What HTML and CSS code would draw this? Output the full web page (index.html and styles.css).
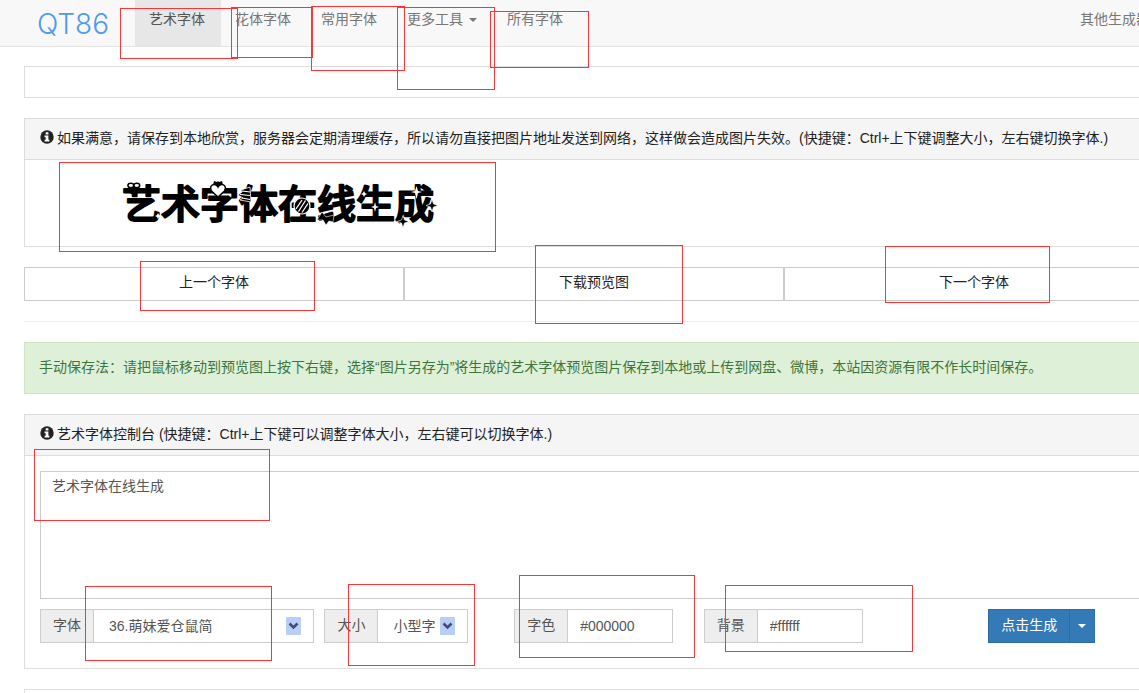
FILE: index.html
```html
<!DOCTYPE html>
<html lang="zh-CN">
<head>
<meta charset="utf-8">
<title>QT86 艺术字体</title>
<link rel="stylesheet" href="styles.css">
</head>
<body>
<div class="page">
  <header class="navbar">
    <a class="brand" href="#">QT86</a>
    <nav class="nav">
      <a class="nav-link active" href="#">艺术字体</a>
      <a class="nav-link" href="#">花体字体</a>
      <a class="nav-link" href="#">常用字体</a>
      <a class="nav-link" href="#">更多工具<span class="caret"></span></a>
      <a class="nav-link" href="#">所有字体</a>
      <a class="nav-link nav-end" href="#">其他生成器</a>
    </nav>
  </header>

  <main class="container">
    <div class="panel strip"></div>

    <section class="panel">
      <h2 class="panel-heading">
        <svg class="info" viewBox="0 0 14 14" aria-hidden="true"><circle cx="7" cy="7" r="6.7" fill="#222"/><path d="M5.7 2.300h2.700v2.100H5.700zM4.600 5.500h3.800v4.200h1v1.800H4.600V9.700h1.100V7.200H4.600z" fill="#fff"/></svg>
        <span>如果满意，请保存到本地欣赏，服务器会定期清理缓存，所以请勿直接把图片地址发送到网络，这样做会造成图片失效。(快捷键：Ctrl+上下键调整大小，左右键切换字体.)</span>
      </h2>
      <div class="preview">
        <svg class="art" viewBox="0 0 330 60" role="img" aria-label="艺术字体在线生成">
          <text class="art-text" x="2" y="45">艺术字体在线生成</text>
          <g fill="#fff" stroke="#000" stroke-width="1.500">
            <path d="M12 14l5 7M16 14l-5 7"/>
            <ellipse cx="10.800" cy="12.500" rx="2.900" ry="2.200"/><ellipse cx="16.800" cy="12.500" rx="2.900" ry="2.200"/>
          </g>
          <path d="M93 12l1-4 3 1 1-1 1 1 3-1 1 4z"/>
          <path d="M98 24l-6.500-6c-3.500-6 4-9 6.500-4 2.500-5 10-2 6.500 4z" fill="#fff" stroke="#000" stroke-width="1.500"/>
          <path d="M130 14l1 15-11-2 3-2-5-3 4-3-1-2z" stroke="#fff" stroke-width=".8"/>
          <path d="M122 18l8 1M120 21.500l10 1M122 25l8 1.500" stroke="#fff" stroke-width="1.100"/>
          <circle cx="182" cy="33" r="8" fill="#000" stroke="#fff" stroke-width="1.200"/>
          <path d="M176 36l6-9M178.500 38.500l7-11M182 39.500l6-9" stroke="#fff" stroke-width="1.300"/>
          <path d="M197 47l5-8 4 5 8-2-1 7-4-1-3 4-3-5z" stroke="#fff" stroke-width=".6"/>
          <path d="M26 35l2-1 1-2 1 2 2 1-2 1-1 2-1-2zM35 43l2-1 1-2 1 2 2 1-2 1-1 2-1-2zM241 21l2-1 1-2 1 2 2 1-2 1-1 2-1-2zM251 34l3-1 1-4 1 4 3 1-3 1-1 4-1-4zM291 19l4-1 1.500-5 1.500 5 4 1-4 1-1.500 6-1.500-6z" fill="#fff"/>
          <path d="M306 32.500l4.500-1.500 1.500-4.500 1.500 4.500 4.500 1.500-4.500 1.500-1.500 4.500-1.500-4.500zM277 48.500l4.500-1.500 1.500-4.500 1.500 4.500 4.500 1.500-4.500 1.500-1.500 4.500-1.500-4.500z" stroke="#fff" stroke-width=".6"/>
        </svg>
      </div>
    </section>

    <div class="button-row">
      <button class="btn" type="button">上一个字体</button>
      <button class="btn" type="button">下载预览图</button>
      <button class="btn" type="button">下一个字体</button>
    </div>

    <hr class="rule">

    <p class="alert">手动保存法：请把鼠标移动到预览图上按下右键，选择“图片另存为”将生成的艺术字体预览图片保存到本地或上传到网盘、微博，本站因资源有限不作长时间保存。</p>

    <section class="panel">
      <h2 class="panel-heading">
        <svg class="info" viewBox="0 0 14 14" aria-hidden="true"><circle cx="7" cy="7" r="6.7" fill="#222"/><path d="M5.7 2.300h2.700v2.100H5.700zM4.600 5.500h3.800v4.200h1v1.800H4.600V9.700h1.100V7.200H4.600z" fill="#fff"/></svg>
        <span>艺术字体控制台 (快捷键：Ctrl+上下键可以调整字体大小，左右键可以切换字体.)</span>
      </h2>
      <form class="console">
        <textarea class="source" aria-label="文字内容">艺术字体在线生成</textarea>
        <div class="fields">
          <div class="group">
            <label class="addon" for="font">字体</label>
            <div class="select-box font-box">
              <select class="control" id="font"><option>36.萌妹爱仓鼠简</option></select>
              <svg class="arrow" viewBox="0 0 15 18" aria-hidden="true"><rect width="15" height="18" rx="1" fill="#b9cdf9"/><path d="M3.500 6.500l4 4 4-4" fill="none" stroke="#3d4f70" stroke-width="2.600"/></svg>
            </div>
          </div>
          <div class="group">
            <label class="addon" for="size">大小</label>
            <div class="select-box">
              <select class="control size" id="size"><option>小型字</option></select>
              <svg class="arrow" viewBox="0 0 15 18" aria-hidden="true"><rect width="15" height="18" rx="1" fill="#b9cdf9"/><path d="M3.500 6.500l4 4 4-4" fill="none" stroke="#3d4f70" stroke-width="2.600"/></svg>
            </div>
          </div>
          <div class="group">
            <label class="addon" for="color">字色</label>
            <input class="control color" id="color" type="text" value="#000000">
          </div>
          <div class="group">
            <label class="addon" for="background">背景</label>
            <input class="control color" id="background" type="text" value="#ffffff">
          </div>
          <div class="group">
            <button class="primary" type="button">点击生成</button>
            <button class="primary toggle" type="button" aria-label="更多选项"><span class="caret"></span></button>
          </div>
        </div>
      </form>
    </section>

    <div class="panel tail"></div>
  </main>

  <svg class="marks" aria-hidden="true">
    <rect x="120.500" y="8.500" width="117" height="50"/>
    <rect x="231.500" y="7.500" width="81" height="50"/>
    <rect x="311.500" y="6.500" width="93" height="64"/>
    <rect x="397.500" y="7.500" width="97" height="82"/>
    <rect x="490.500" y="11.500" width="98" height="56"/>
    <rect x="59.500" y="162.500" width="436" height="89"/>
    <rect x="140.500" y="261.500" width="174" height="49"/>
    <rect x="535.500" y="245.500" width="147" height="78"/>
    <rect x="885.500" y="246.500" width="164" height="56"/>
    <rect x="34.500" y="449.500" width="235" height="71"/>
    <rect x="85.500" y="586.500" width="186" height="74"/>
    <rect x="348.500" y="584.500" width="126" height="81"/>
    <rect x="519.500" y="575.500" width="175" height="82"/>
    <rect x="725.500" y="585.500" width="187" height="66"/>
  </svg>
</div>
</body>
</html>
```
FILE: styles.css
```css
* { box-sizing: border-box; }

body {
  margin: 0;
  background: #fff;
  color: #222;
  font: 14px/20px "Liberation Sans", "Noto Sans CJK SC", sans-serif;
}

button, input, select, textarea { font: inherit; color: inherit; border-radius: 0; margin: 0; }

.page {
  position: relative;
  display: flex;
  flex-direction: column;
  min-height: 100vh;
  overflow: hidden;
}

/* Navigation */
.navbar {
  display: flex;
  padding-left: 37px;
  margin-right: -25px;
  background: #f8f8f8;
  border-bottom: 1px solid #e2e2e2;
}
.brand {
  width: 98px;
  padding-top: 8px;
  color: #4f9aec;
  font: 300 28px/32px Inter, sans-serif;
  text-decoration: none;
}
.nav { display: flex; flex: 1; }
.nav-link {
  padding: 9px 16px 17px 14px;
  color: #777;
  text-decoration: none;
  white-space: nowrap;
}
.nav-link.active { background: #e7e7e7; color: #555; }
.nav-end { margin-left: auto; padding-right: 14px; }
.caret {
  display: inline-block;
  border: 4px solid transparent;
  border-top-color: currentColor;
  border-bottom: 0;
  vertical-align: middle;
}
.nav-link .caret { margin-left: 6px; }

/* Panels */
.container {
  display: flex;
  flex-direction: column;
  flex: 1;
  gap: 20px;
  margin: 19px -25px 0 24px;
}
.panel { border: 1px solid #ddd; }
.strip { height: 32px; }
.tail { flex: 1; min-height: 4px; border-bottom: 0; }
.panel-heading {
  display: flex;
  align-items: center;
  gap: 3px;
  margin: 0;
  padding: 9px 15px 11px;
  background: #f5f5f5;
  border-bottom: 1px solid #ddd;
  font-size: 14px;
  font-weight: 400;
  white-space: nowrap;
}
.info { width: 14px; height: 14px; margin-bottom: 3px; }
.preview { padding: 13px 95px; }
.art { display: block; width: 330px; height: 60px; }
.art-text {
  font: 500 39px "Noto Sans CJK SC", sans-serif;
  stroke: #000;
  stroke-width: 2;
  stroke-linejoin: round;
}

.button-row { display: grid; grid-template-columns: repeat(3, 1fr); }
.btn {
  height: 34px;
  padding: 0 12px 4px;
  background: #fff;
  border: 1px solid #ccc;
}
.rule { width: 100%; margin: 0; border: 0; border-top: 1px solid #eee; }
.alert {
  margin: 0;
  padding: 14px 14px 16px;
  background: #dff0d8;
  border: 1px solid #d0e5c1;
  color: #3c763d;
  white-space: nowrap;
}

/* Console */
.console { padding: 15px 15px 25px; color: #555; }
.source {
  display: block;
  width: 100%;
  height: 128px;
  padding: 4px 11px;
  background: #fff;
  border: 1px solid #ccc;
  resize: none;
}
.fields {
  display: grid;
  grid-template-columns: 275fr 180fr 180fr 275fr 180fr;
  gap: 10px;
  margin: 10px -20px 0 0;
}
.group { display: flex; height: 34px; }
.addon {
  padding: 5px 12px;
  background: #eee;
  border: 1px solid #ccc;
  border-right: 0;
  white-space: nowrap;
}
.control {
  height: 34px;
  padding: 0 12px;
  background: #fff;
  border: 1px solid #ccc;
  appearance: none;
}
.color { width: 106px; }
.select-box { position: relative; }
.select-box .control { width: 100%; padding: 0 15px; }
.select-box .size { width: 91px; }
.font-box { flex: 1; }
.arrow {
  position: absolute;
  top: 8px;
  right: 13px;
  width: 15px;
  height: 18px;
  pointer-events: none;
}
.primary {
  padding: 0 12px 2px;
  background: #337ab7;
  border: 1px solid #2e6da4;
  color: #fff;
}
.toggle { padding: 0 8px; margin-left: -1px; }
.toggle .caret { display: block; }

/* Highlight frames */
.marks {
  position: absolute;
  inset: 0;
  width: 100%;
  height: 100%;
  fill: none;
  stroke: #f33;
  pointer-events: none;
}
```
